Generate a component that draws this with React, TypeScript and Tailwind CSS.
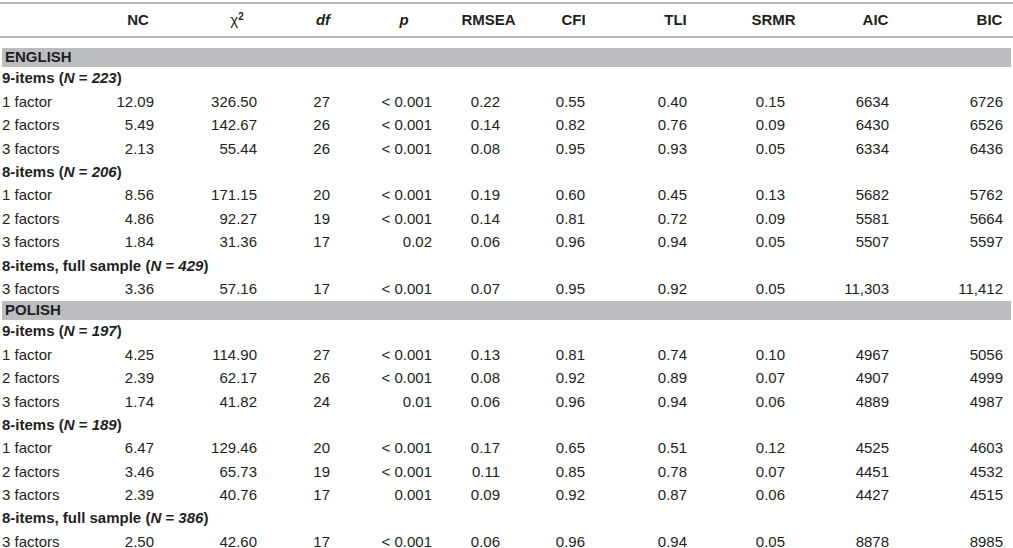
import React from 'react';

type Row = { label: string; v: string[] };
type Group = { title: string; n: string; rows: Row[] };
type Section = { name: string; groups: Group[] };

// grid: label + 10 data columns, numbers right-aligned at the column edge
const cols = 'grid-cols-[110px_44px_103px_73px_102px_68px_85px_102px_98px_104px_114px_10px]';

// header is centred over the widest figure of its column (a touch to the right)
const headers: { node: React.ReactNode; w: string }[] = [
  { node: 'NC', w: 'w-[32px]' },
  {
    node: (
      <span>
        <span className="font-normal">χ</span>
        <sup className="text-[10px]">2</sup>
      </span>
    ),
    w: 'w-[40px]',
  },
  { node: <i>df</i>, w: 'w-[14px]' },
  { node: <i>p</i>, w: 'w-[56px]' },
  { node: 'RMSEA', w: 'w-[23px]' },
  { node: 'CFI', w: 'w-[23px]' },
  { node: 'TLI', w: 'w-[23px]' },
  { node: 'SRMR', w: 'w-[23px]' },
  { node: 'AIC', w: 'w-[27px]' },
  { node: 'BIC', w: 'w-[27px]' },
];

const lt = '< 0.001';

const sections: Section[] = [
  {
    name: 'ENGLISH',
    groups: [
      {
        title: '9-items',
        n: '223',
        rows: [
          { label: '1 factor', v: ['12.09', '326.50', '27', lt, '0.22', '0.55', '0.40', '0.15', '6634', '6726'] },
          { label: '2 factors', v: ['5.49', '142.67', '26', lt, '0.14', '0.82', '0.76', '0.09', '6430', '6526'] },
          { label: '3 factors', v: ['2.13', '55.44', '26', lt, '0.08', '0.95', '0.93', '0.05', '6334', '6436'] },
        ],
      },
      {
        title: '8-items',
        n: '206',
        rows: [
          { label: '1 factor', v: ['8.56', '171.15', '20', lt, '0.19', '0.60', '0.45', '0.13', '5682', '5762'] },
          { label: '2 factors', v: ['4.86', '92.27', '19', lt, '0.14', '0.81', '0.72', '0.09', '5581', '5664'] },
          { label: '3 factors', v: ['1.84', '31.36', '17', '0.02', '0.06', '0.96', '0.94', '0.05', '5507', '5597'] },
        ],
      },
      {
        title: '8-items, full sample',
        n: '429',
        rows: [
          { label: '3 factors', v: ['3.36', '57.16', '17', lt, '0.07', '0.95', '0.92', '0.05', '11,303', '11,412'] },
        ],
      },
    ],
  },
  {
    name: 'POLISH',
    groups: [
      {
        title: '9-items',
        n: '197',
        rows: [
          { label: '1 factor', v: ['4.25', '114.90', '27', lt, '0.13', '0.81', '0.74', '0.10', '4967', '5056'] },
          { label: '2 factors', v: ['2.39', '62.17', '26', lt, '0.08', '0.92', '0.89', '0.07', '4907', '4999'] },
          { label: '3 factors', v: ['1.74', '41.82', '24', '0.01', '0.06', '0.96', '0.94', '0.06', '4889', '4987'] },
        ],
      },
      {
        title: '8-items',
        n: '189',
        rows: [
          { label: '1 factor', v: ['6.47', '129.46', '20', lt, '0.17', '0.65', '0.51', '0.12', '4525', '4603'] },
          { label: '2 factors', v: ['3.46', '65.73', '19', lt, '0.11', '0.85', '0.78', '0.07', '4451', '4532'] },
          { label: '3 factors', v: ['2.39', '40.76', '17', '0.001', '0.09', '0.92', '0.87', '0.06', '4427', '4515'] },
        ],
      },
      {
        title: '8-items, full sample',
        n: '386',
        rows: [
          { label: '3 factors', v: ['2.50', '42.60', '17', lt, '0.06', '0.96', '0.94', '0.05', '8878', '8985'] },
        ],
      },
    ],
  },
];

const Rule = () => <div className="h-[2px] bg-[#b3b5b8]" />;

export default function App() {
  return (
    <div
      className="w-[1013px] h-[548px] overflow-hidden bg-white pt-[2px] text-[15px] text-[#231f20]"
      style={{ fontFamily: '"Liberation Sans", Arial, sans-serif' }}
    >
      <Rule />
      <div className={`grid ${cols} h-[32px] items-center font-bold`}>
        <div />
        {headers.map((h, i) => (
          <div key={i} className="flex justify-end">
            <div className={`flex ${h.w} justify-center whitespace-nowrap`}>{h.node}</div>
          </div>
        ))}
        <div />
      </div>
      <Rule />

      <div className="pt-[10px]">
        {sections.map((s) => (
          <div key={s.name}>
            <div className="mx-[2px] flex h-[19px] items-center bg-[#bcbdc0] pl-[3px] font-bold">{s.name}</div>
            {s.groups.map((g) => (
              <div key={g.title + g.n}>
                <div className="flex h-[23.4px] items-center pl-[2px] font-bold whitespace-nowrap">
                  {g.title} (<i>N</i>&nbsp;=&nbsp;<i>{g.n}</i>)
                </div>
                {g.rows.map((r, ri) => (
                  <div key={ri} className={`grid ${cols} h-[23.4px] items-center`}>
                    <div className="pl-[2px] whitespace-nowrap">{r.label}</div>
                    {r.v.map((v, vi) => (
                      <div key={vi} className="flex justify-end whitespace-nowrap">
                        {v}
                      </div>
                    ))}
                    <div />
                  </div>
                ))}
              </div>
            ))}
          </div>
        ))}
      </div>
    </div>
  );
}
